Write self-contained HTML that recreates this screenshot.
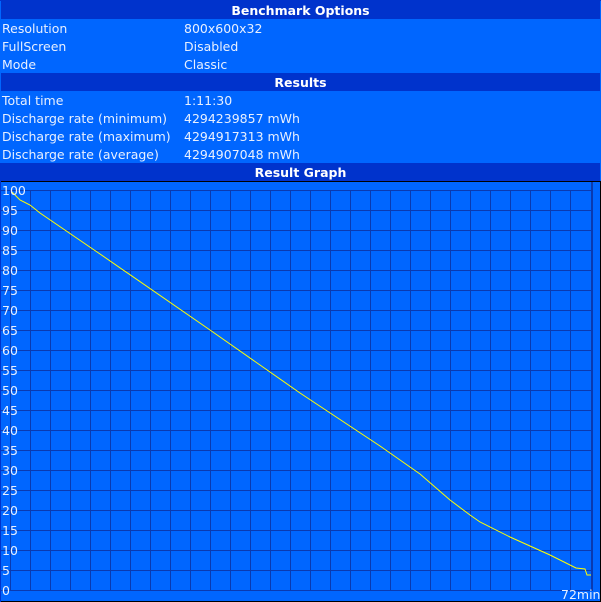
<!DOCTYPE html>
<html><head><style>
body{margin:0;width:601px;height:602px;background:#0066ff;overflow:hidden;font-family:"DejaVu Sans","Liberation Sans",sans-serif;font-size:12.5px;color:#e8f0ff}
.h{position:absolute;left:1px;width:599px;height:18px;background:#0033cc;color:#fff;font-weight:bold;text-align:center;line-height:19px}
.r{position:absolute;left:2px;height:18px;line-height:19px;white-space:nowrap}
.v{position:absolute;left:184px;height:18px;line-height:19px;white-space:nowrap}
</style></head><body>
<div style="position:absolute;left:0;top:0;width:601px;height:1px;background:#0033cc"></div>
<div class="h" style="top:1px">Benchmark Options</div>
<div class="r" style="top:19px">Resolution</div><div class="v" style="top:19px">800x600x32</div>
<div class="r" style="top:37px">FullScreen</div><div class="v" style="top:37px">Disabled</div>
<div class="r" style="top:55px">Mode</div><div class="v" style="top:55px">Classic</div>
<div class="h" style="top:73px">Results</div>
<div class="r" style="top:91px">Total time</div><div class="v" style="top:91px">1:11:30</div>
<div class="r" style="top:109px">Discharge rate (minimum)</div><div class="v" style="top:109px">4294239857 mWh</div>
<div class="r" style="top:127px">Discharge rate (maximum)</div><div class="v" style="top:127px">4294917313 mWh</div>
<div class="r" style="top:145px">Discharge rate (average)</div><div class="v" style="top:145px">4294907048 mWh</div>
<div class="h" style="top:163px">Result Graph</div>
<svg style="position:absolute;left:0;top:0" width="601" height="602">
<rect x="0.5" y="181.5" width="600" height="420" fill="none" stroke="#000"/>
<rect x="0" y="163" width="1" height="439" fill="#0033cc"/>
<g stroke="#0a3ab0" stroke-width="1" fill="none">
<path d="M10.5 190V590M30.5 190V590M50.5 190V590M70.5 190V590M90.5 190V590M110.5 190V590M130.5 190V590M150.5 190V590M170.5 190V590M190.5 190V590M210.5 190V590M230.5 190V590M250.5 190V590M270.5 190V590M290.5 190V590M310.5 190V590M330.5 190V590M350.5 190V590M370.5 190V590M390.5 190V590M410.5 190V590M430.5 190V590M450.5 190V590M470.5 190V590M490.5 190V590M510.5 190V590M530.5 190V590M550.5 190V590M570.5 190V590"/>
<path d="M1 190.5H591M1 210.5H591M1 230.5H591M1 250.5H591M1 270.5H591M1 290.5H591M1 310.5H591M1 330.5H591M1 350.5H591M1 370.5H591M1 390.5H591M1 410.5H591M1 430.5H591M1 450.5H591M1 470.5H591M1 490.5H591M1 510.5H591M1 530.5H591M1 550.5H591M1 570.5H591M1 590.5H591"/>
</g>
<rect x="591" y="182" width="2" height="409" fill="#0a3ab0"/>
<polyline points="12,192 20,200 30,205 40,213 100,254 210,330 300,393 380,446 420,474 450,500 470,515 480,522 510,537 550,555 576,568 585,569 587,575 591,575" fill="none" stroke="#ffff00" stroke-width="1"/>
<g fill="#e8f0ff" font-size="12.5" font-family="DejaVu Sans,sans-serif">
<text x="2" y="195">100</text><text x="2" y="215">95</text><text x="2" y="235">90</text><text x="2" y="255">85</text><text x="2" y="275">80</text><text x="2" y="295">75</text><text x="2" y="315">70</text><text x="2" y="335">65</text><text x="2" y="355">60</text><text x="2" y="375">55</text><text x="2" y="395">50</text><text x="2" y="415">45</text><text x="2" y="435">40</text><text x="2" y="455">35</text><text x="2" y="475">30</text><text x="2" y="495">25</text><text x="2" y="515">20</text><text x="2" y="575">5</text><text x="2" y="535">15</text><text x="2" y="555">10</text><text x="2" y="595">0</text>
<text x="561" y="599">72min</text>
</g>
</svg>
</body></html>
